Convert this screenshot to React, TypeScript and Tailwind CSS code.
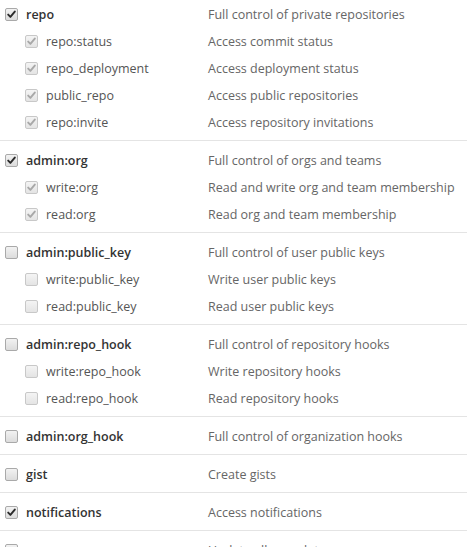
import React from "react";

type Scope = {
  name: string;
  desc: string;
  checked: boolean;
  children?: { name: string; desc: string }[];
};

const scopes: Scope[] = [
  {
    name: "repo",
    desc: "Full control of private repositories",
    checked: true,
    children: [
      { name: "repo:status", desc: "Access commit status" },
      { name: "repo_deployment", desc: "Access deployment status" },
      { name: "public_repo", desc: "Access public repositories" },
      { name: "repo:invite", desc: "Access repository invitations" },
    ],
  },
  {
    name: "admin:org",
    desc: "Full control of orgs and teams",
    checked: true,
    children: [
      { name: "write:org", desc: "Read and write org and team membership" },
      { name: "read:org", desc: "Read org and team membership" },
    ],
  },
  {
    name: "admin:public_key",
    desc: "Full control of user public keys",
    checked: false,
    children: [
      { name: "write:public_key", desc: "Write user public keys" },
      { name: "read:public_key", desc: "Read user public keys" },
    ],
  },
  {
    name: "admin:repo_hook",
    desc: "Full control of repository hooks",
    checked: false,
    children: [
      { name: "write:repo_hook", desc: "Write repository hooks" },
      { name: "read:repo_hook", desc: "Read repository hooks" },
    ],
  },
  { name: "admin:org_hook", desc: "Full control of organization hooks", checked: false },
  { name: "gist", desc: "Create gists", checked: false },
  { name: "notifications", desc: "Access notifications", checked: true },
  { name: "user", desc: "Update all user data", checked: false },
];

const Box = ({ checked, disabled }: { checked: boolean; disabled?: boolean }) => (
  <span
    className={
      "flex h-[13px] w-[13px] shrink-0 items-center justify-center rounded-[2px] border " +
      (disabled
        ? "border-[#c8c8c8] bg-gradient-to-b from-[#f4f4f4] to-[#e4e4e4]"
        : "border-[#a9a9a9] bg-gradient-to-b from-[#f2f2f2] to-[#dcdcdc]")
    }
  >
    {checked && (
      <svg width="9" height="9" viewBox="0 0 9 9">
        <path
          d="M1.2 4.6 L3.4 6.9 L7.8 1.6"
          fill="none"
          stroke={disabled ? "#a8a8a8" : "#2b2b2b"}
          strokeWidth="1.9"
          strokeLinecap="round"
          strokeLinejoin="round"
        />
      </svg>
    )}
  </span>
);

const App = () => {
  return (
    <div className="h-[547px] w-[467px] overflow-hidden bg-white font-['Open_Sans',sans-serif] text-[12.5px]">
      {scopes.map((scope, i) => (
        <div
          key={scope.name}
          className={
            "border-b border-[#e4e4e4] pb-1 " + (i === 0 ? "pt-px" : "pt-[6px]")
          }
        >
          <div className="flex h-[27px] items-center">
            <div className="flex w-[208px] items-center">
              <div className="ml-[5px] mr-[8px]">
                <Box checked={scope.checked} />
              </div>
              <span className="pt-[2px] font-semibold text-[#333]">{scope.name}</span>
            </div>
            <span className="pt-[2px] text-[#666]">{scope.desc}</span>
          </div>
          {scope.children?.map((c) => (
            <div key={c.name} className="flex h-[27px] items-center">
              <div className="flex w-[208px] items-center">
                <div className="ml-[25px] mr-[8px]">
                  <Box checked={scope.checked} disabled />
                </div>
                <span className="pt-[2px] text-[#555]">{c.name}</span>
              </div>
              <span className="pt-[2px] text-[#666]">{c.desc}</span>
            </div>
          ))}
        </div>
      ))}
    </div>
  );
};

export default App;
